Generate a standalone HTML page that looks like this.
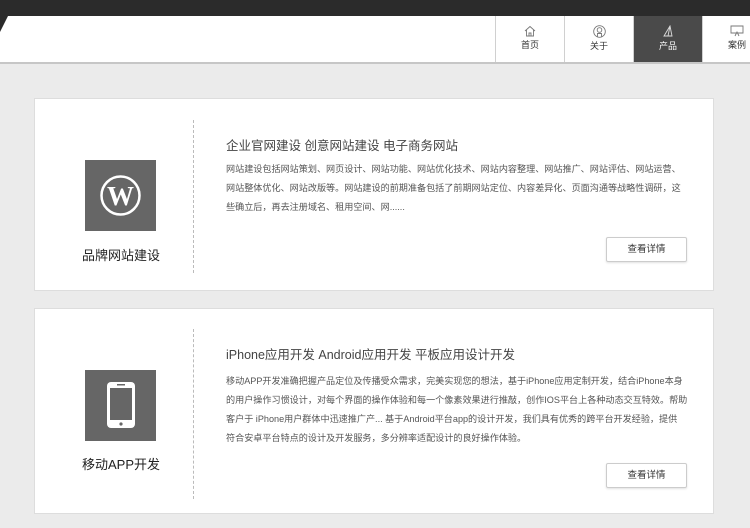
<!DOCTYPE html>
<html><head><meta charset="utf-8"><style>
*{margin:0;padding:0;box-sizing:border-box}
body{width:750px;height:528px;overflow:hidden;background:#ebebeb;font-family:"Liberation Sans","Noto Sans CJK SC",sans-serif;position:relative}
.top{position:absolute;left:0;top:0;width:750px;height:16px;background:#2b2b2b}
.hdr{position:absolute;left:0;top:16px;width:750px;height:48px;background:#fff;border-bottom:2px solid #c6c6c6}
.slant{position:absolute;left:0;top:16px;width:0;height:0;border-top:16px solid #2b2b2b;border-right:8px solid transparent}
.nav{position:absolute;top:16px;height:46px;width:69px;border-left:1px solid #d0d0d0;text-align:center;font-size:9px;color:#333}
.nav svg{display:block;margin:9px auto 1px}
.nav.on{background:#4a4a4a;color:#fff}
.card{position:absolute;left:34px;width:680px;background:#fff;border:1px solid #ddd}
.ico{position:absolute;left:50px;width:71px;height:71px;background:#666}
.lab{position:absolute;left:0;width:172px;text-align:center;font-size:13px;color:#222}
.div{position:absolute;left:158px;border-left:1px dashed #bbb}
.t{position:absolute;left:191px;font-size:12.5px;color:#444}
.p{position:absolute;left:191px;font-size:9.1px;line-height:19px;color:#555;white-space:nowrap}
.btn{position:absolute;left:571px;width:81px;height:25px;border:1px solid #ccc;border-radius:2px;box-shadow:0 1px 2px rgba(0,0,0,.12);font-size:9.5px;color:#333;text-align:center;line-height:23px}
</style></head><body>
<div class="top"></div>
<div class="hdr"></div>
<div class="slant"></div>
<div class="nav" style="left:495px"><svg width="12" height="12" viewBox="0 0 12 12" fill="none" stroke="#777" stroke-width="0.9"><path d="M1 6 6 1.5 11 6M2.5 5v6h7V5M5 11V8h2v3"/></svg>首页</div>
<div class="nav" style="left:564px"><svg width="13" height="13" viewBox="0 0 13 13" fill="none" stroke="#777" stroke-width="0.9"><circle cx="6.5" cy="6.5" r="5.8"/><circle cx="6.5" cy="5" r="2.3"/><path d="M4.5 12V8.5h4V12"/></svg>关于</div>
<div class="nav on" style="left:633px"><svg width="12" height="13" viewBox="0 0 12 13" fill="none" stroke="#ddd" stroke-width="0.9"><path d="M8 1 2 11h8zM8 1 6 11"/></svg>产品</div>
<div class="nav" style="left:702px"><svg width="14" height="12" viewBox="0 0 14 12" fill="none" stroke="#777" stroke-width="0.9"><path d="M1 1h12v7H1zM5 11l2-4 2 4"/></svg>案例</div>

<div class="card" style="top:98px;height:193px">
 <div class="ico" style="top:61px"><svg width="71" height="71" viewBox="0 0 71 71"><circle cx="35.5" cy="35.5" r="19" fill="none" stroke="#fff" stroke-width="2.5"/><text x="35.5" y="45" text-anchor="middle" font-family="Liberation Serif,serif" font-weight="bold" font-size="27" fill="#fff">W</text></svg></div>
 <div class="lab" style="top:146px">品牌网站建设</div>
 <div class="div" style="top:21px;height:153px"></div>
 <div class="t" style="top:36px">企业官网建设 创意网站建设 电子商务网站</div>
 <div class="p" style="top:61px">网站建设包括网站策划、网页设计、网站功能、网站优化技术、网站内容整理、网站推广、网站评估、网站运营、<br>网站整体优化、网站改版等。网站建设的前期准备包括了前期网站定位、内容差异化、页面沟通等战略性调研，这<br>些确立后，再去注册域名、租用空间、网......</div>
 <div class="btn" style="top:138px">查看详情</div>
</div>

<div class="card" style="top:308px;height:206px">
 <div class="ico" style="top:61px"><svg width="71" height="71" viewBox="0 0 71 71"><rect x="22" y="12" width="28" height="46" rx="4" fill="#fff"/><rect x="25" y="18" width="22" height="32" fill="#666"/><rect x="32" y="14" width="8" height="1.5" fill="#666"/><circle cx="36" cy="54" r="1.6" fill="#666"/></svg></div>
 <div class="lab" style="top:145px">移动APP开发</div>
 <div class="div" style="top:20px;height:170px"></div>
 <div class="t" style="top:35px">iPhone应用开发 Android应用开发 平板应用设计开发</div>
 <div class="p" style="top:63px">移动APP开发准确把握产品定位及传播受众需求，完美实现您的想法，基于iPhone应用定制开发，结合iPhone本身<br>的用户操作习惯设计，对每个界面的操作体验和每一个像素效果进行推敲，创作IOS平台上各种动态交互特效。帮助<br>客户于 iPhone用户群体中迅速推广产... 基于Android平台app的设计开发，我们具有优秀的跨平台开发经验，提供<br>符合安卓平台特点的设计及开发服务，多分辨率适配设计的良好操作体验。</div>
 <div class="btn" style="top:154px">查看详情</div>
</div>
</body></html>
